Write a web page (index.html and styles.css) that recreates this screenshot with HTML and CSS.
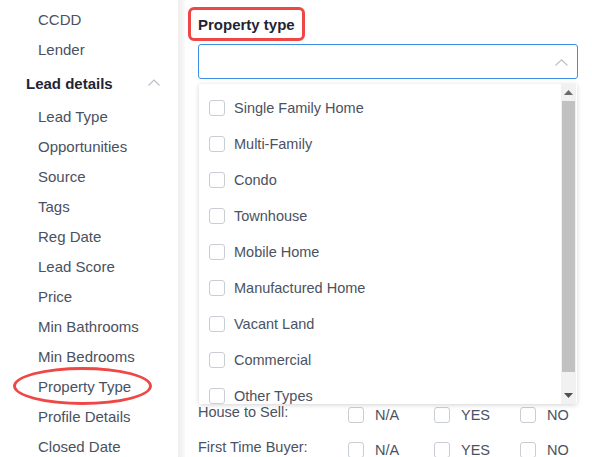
FILE: index.html
```html
<!DOCTYPE html>
<html>
<head>
<meta charset="utf-8">
<link rel="stylesheet" href="styles.css">
</head>
<body>
<div class="page">
  <aside class="sidebar">
    <div class="item">CCDD</div>
    <div class="item">Lender</div>
    <div class="group-head">
      <span>Lead details</span>
      <svg class="chev" width="12" height="7" viewBox="0 0 12 7"><path d="M0.5 6.5 L6 1 L11.5 6.5" fill="none" stroke="#b8bcc4" stroke-width="1.1"/></svg>
    </div>
    <div class="item">Lead Type</div>
    <div class="item">Opportunities</div>
    <div class="item">Source</div>
    <div class="item">Tags</div>
    <div class="item">Reg Date</div>
    <div class="item">Lead Score</div>
    <div class="item">Price</div>
    <div class="item">Min Bathrooms</div>
    <div class="item">Min Bedrooms</div>
    <div class="item">Property Type</div>
    <div class="item">Profile Details</div>
    <div class="item">Closed Date</div>
    <div class="ring"></div>
  </aside>
  <div class="divider"></div>
  <main class="main">
    <div class="title-wrap"><span class="title">Property type</span></div>
    <div class="select">
      <svg class="select-chev" width="13" height="7" viewBox="0 0 13 7"><path d="M0.5 6.5 L6.5 0.8 L12.5 6.5" fill="none" stroke="#bfbfbf" stroke-width="1.1"/></svg>
      <div class="dropdown">
        <div class="list">
          <div class="opt"><span class="cb"></span>Single Family Home</div>
          <div class="opt"><span class="cb"></span>Multi-Family</div>
          <div class="opt"><span class="cb"></span>Condo</div>
          <div class="opt"><span class="cb"></span>Townhouse</div>
          <div class="opt"><span class="cb"></span>Mobile Home</div>
          <div class="opt"><span class="cb"></span>Manufactured Home</div>
          <div class="opt"><span class="cb"></span>Vacant Land</div>
          <div class="opt"><span class="cb"></span>Commercial</div>
          <div class="opt"><span class="cb"></span>Other Types</div>
        </div>
        <div class="scrollbar">
          <div class="arrow"><svg width="9" height="5" viewBox="0 0 9 5"><path d="M0 5 L4.5 0 L9 5 Z" fill="#6a6a6a"/></svg></div>
          <div class="thumb"></div>
          <div class="track"></div>
          <div class="arrow"><svg width="9" height="5" viewBox="0 0 9 5"><path d="M0 0 L9 0 L4.5 5 Z" fill="#505050"/></svg></div>
        </div>
      </div>
    </div>
    <div class="rows">
      <div class="row">
        <span class="label">House to Sell:</span>
        <span class="choice"><span class="cb"></span>N/A</span>
        <span class="choice"><span class="cb"></span>YES</span>
        <span class="choice"><span class="cb"></span>NO</span>
      </div>
      <div class="row">
        <span class="label">First Time Buyer:</span>
        <span class="choice"><span class="cb"></span>N/A</span>
        <span class="choice"><span class="cb"></span>YES</span>
        <span class="choice"><span class="cb"></span>NO</span>
      </div>
    </div>
  </main>
</div>
</body>
</html>
```

FILE: styles.css
```css
html, body {
  margin: 0;
  padding: 0;
  background: #ffffff;
}
body {
  font-family: "Liberation Sans", Arial, sans-serif;
  color: #4b5262;
  overflow: hidden;
}
.page {
  display: flex;
  width: 592px;
  height: 457px;
  overflow: hidden;
}
.sidebar {
  position: relative;
  width: 178px;
  flex: none;
  padding-top: 5px;
  box-sizing: border-box;
}
.item {
  height: 30px;
  line-height: 30px;
  padding-left: 38px;
  font-size: 15px;
  color: #4a5161;
  white-space: nowrap;
}
.group-head {
  height: 37px;
  display: flex;
  align-items: center;
  justify-content: space-between;
  padding-left: 26px;
  padding-right: 18px;
  font-size: 15px;
  font-weight: bold;
  color: #1f2533;
}
.chev {
  display: block;
  margin-top: -3px;
}
.ring {
  position: absolute;
  left: 13px;
  top: 367px;
  width: 133px;
  height: 32px;
  border: 3px solid #ef4646;
  border-radius: 50%;
}
.divider {
  width: 7px;
  flex: none;
  background: linear-gradient(to right, #eeeeee, #f4f4f4 60%, #fbfbfb);
}
.main {
  flex: 1;
  padding-left: 13px;
}
.title-wrap {
  margin-top: 7px;
  height: 34px;
}
.title {
  display: inline-block;
  margin-left: -10px;
  padding: 0 7px;
  height: 28px;
  line-height: 30px;
  border: 3px solid #ef4646;
  border-radius: 6px;
  font-size: 15px;
  font-weight: bold;
  color: #1f2533;
}
.select {
  position: relative;
  margin-top: 3px;
  width: 380px;
  height: 35px;
  box-sizing: border-box;
  border: 1px solid #3b8fe6;
  border-radius: 3px;
}
.select-chev {
  position: absolute;
  right: 9px;
  top: 14px;
}
.dropdown {
  position: absolute;
  top: 39px;
  left: 0;
  width: 378px;
  height: 320px;
  background: #ffffff;
  box-shadow: 0 1px 5px rgba(0, 0, 0, 0.18);
  border-radius: 2px;
  display: flex;
  overflow: hidden;
  z-index: 2;
}
.list {
  flex: 1;
  padding-top: 6px;
  overflow: hidden;
}
.opt {
  height: 36px;
  display: flex;
  align-items: center;
  gap: 9px;
  padding-left: 10px;
  font-size: 14.5px;
  color: #4b5262;
  white-space: nowrap;
}
.cb {
  display: inline-block;
  flex: none;
  width: 14px;
  height: 14px;
  border: 1px solid #c9cdd4;
  border-radius: 3px;
  background: #ffffff;
}
.scrollbar {
  width: 15px;
  flex: none;
  margin-right: 1px;
  background: #f1f1f1;
  display: flex;
  flex-direction: column;
}
.arrow {
  height: 17px;
  display: flex;
  align-items: center;
  justify-content: center;
}
.thumb {
  height: 271px;
  margin: 0 1px;
  background: #c1c1c1;
}
.track {
  flex: 1;
}
.rows {
  margin-top: 318px;
}
.row {
  display: grid;
  grid-template-columns: 150px 86px 86px 86px;
  height: 35px;
  align-items: center;
  font-size: 14.5px;
  color: #4b5262;
}
.label {
  margin-top: -6px;
  white-space: nowrap;
}
.choice {
  display: flex;
  align-items: center;
  gap: 11px;
}
```
